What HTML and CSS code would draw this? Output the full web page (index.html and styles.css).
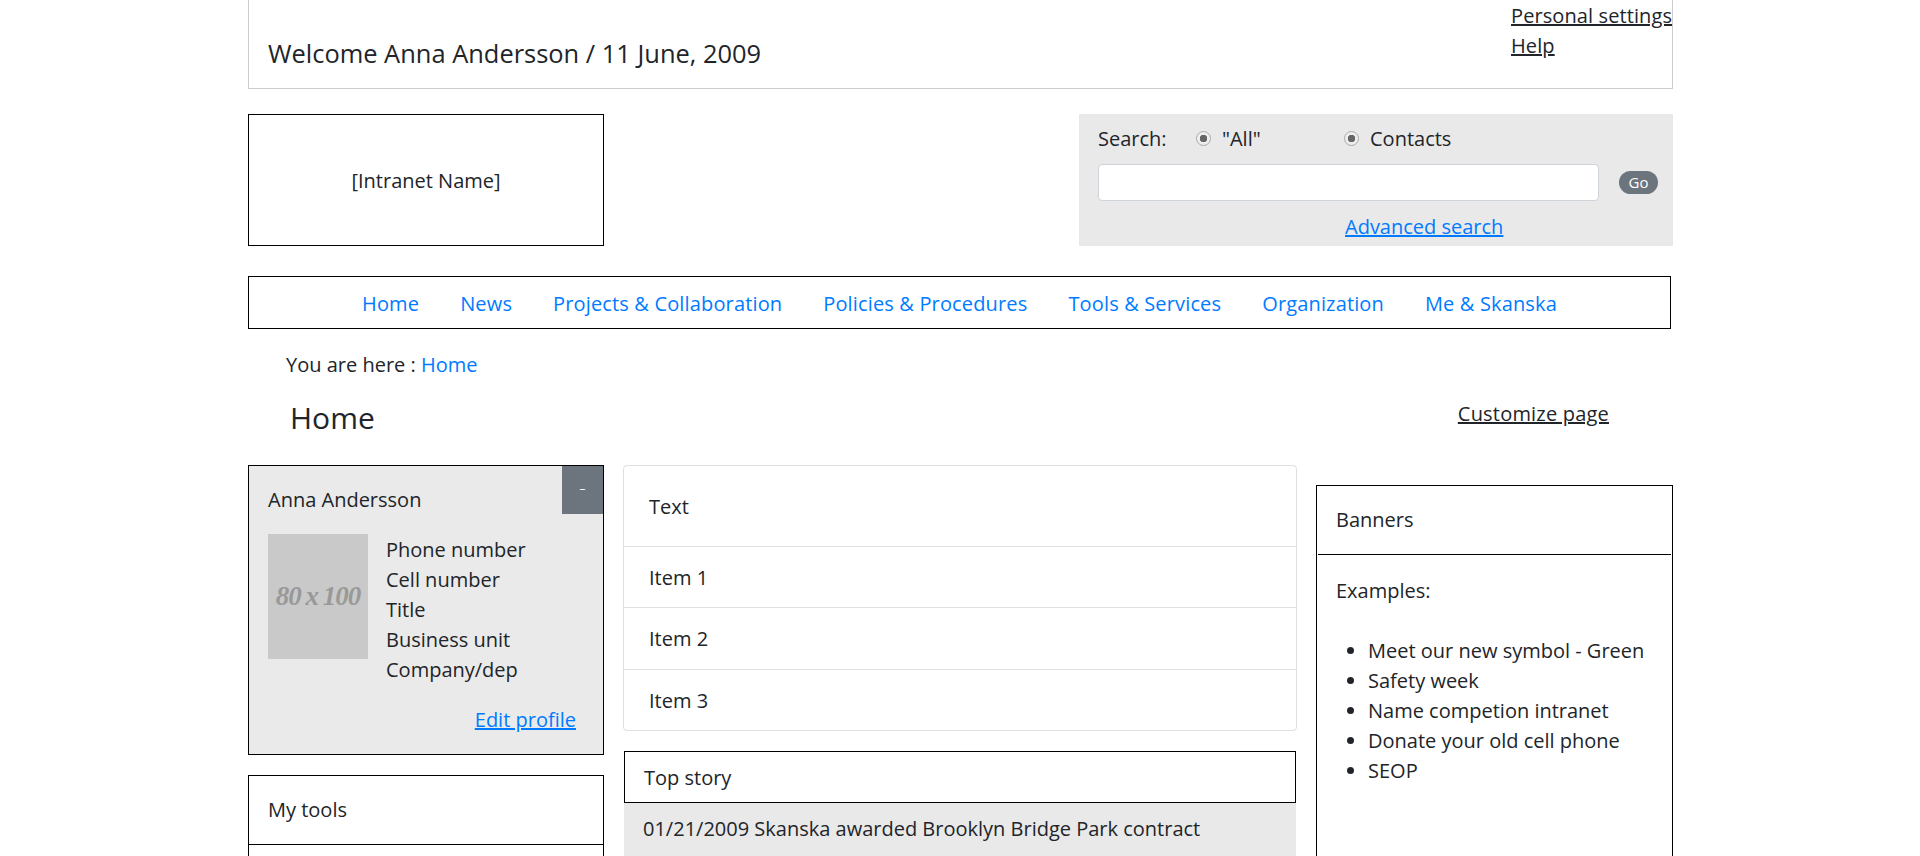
FILE: index.html
```html
<!DOCTYPE html>
<html>
<head>
	<title>Intranet Home</title>
	<link rel="stylesheet" href="styles.css">
</head>
<body>
	<div class="page">
		<div class="topbar">
			<div class="welcome">Welcome Anna Andersson / 11 June, 2009</div>
			<div class="toplinks">
				<a href="#">Personal settings</a>
				<a href="#">Help</a>
			</div>
		</div>
		<div class="masthead">
			<div class="logo">[Intranet Name]</div>
			<form class="search">
				<div class="search-opts">
					<span class="search-label">Search:</span>
					<label class="opt opt-all"><input type="radio" checked disabled>"All"</label>
					<label class="opt"><input type="radio" checked disabled>Contacts</label>
				</div>
				<div class="search-row">
					<input class="search-input" type="text">
					<button class="go" type="button">Go</button>
				</div>
				<a class="advanced" href="#">Advanced search</a>
			</form>
		</div>
		<div class="nav">
			<a href="#">Home</a>
			<a href="#">News</a>
			<a href="#">Projects &amp; Collaboration</a>
			<a href="#">Policies &amp; Procedures</a>
			<a href="#">Tools &amp; Services</a>
			<a href="#">Organization</a>
			<a href="#">Me &amp; Skanska</a>
		</div>
		<div class="crumbs">You are here : <a href="#">Home</a></div>
		<div class="title-row">
			<h1>Home</h1>
			<a class="customize" href="#">Customize page</a>
		</div>
		<div class="columns">
			<div class="col-left">
				<div class="profile">
					<button class="collapse" type="button">-</button>
					<div class="profile-name">Anna Andersson</div>
					<div class="profile-body">
						<div class="photo">80 x 100</div>
						<ul class="profile-info">
							<li>Phone number</li>
							<li>Cell number</li>
							<li>Title</li>
							<li>Business unit</li>
							<li>Company/dep</li>
						</ul>
					</div>
					<div class="profile-edit"><a href="#">Edit profile</a></div>
				</div>
				<div class="box tools">
					<div class="box-head">My tools</div>
					<div class="box-body"></div>
				</div>
			</div>
			<div class="col-mid">
				<ul class="list">
					<li class="list-first">Text</li>
					<li>Item 1</li>
					<li>Item 2</li>
					<li>Item 3</li>
				</ul>
				<div class="story-head">Top story</div>
				<div class="story-body">01/21/2009 Skanska awarded Brooklyn Bridge Park contract</div>
			</div>
			<div class="col-right">
				<div class="box banners">
					<div class="box-head">Banners</div>
					<div class="box-body">
						<p>Examples:</p>
						<ul>
							<li>Meet our new symbol - Green</li>
							<li>Safety week</li>
							<li>Name competion intranet</li>
							<li>Donate your old cell phone</li>
							<li>SEOP</li>
						</ul>
					</div>
				</div>
			</div>
		</div>
	</div>
</body>
</html>
```

FILE: styles.css
```css
html, body {
	height: 856px;
	overflow: hidden;
}
body {
	margin: 0;
	font-family: "Open Sans", "Noto Sans", sans-serif;
	font-size: 20px;
	line-height: 30px;
	color: #212529;
	background-color: #fff;
}
a {
	color: #007bff;
}
ul {
	margin: 0;
	padding: 0;
	list-style: none;
}
.page {
	width: 1425px;
	margin-left: 248px;
}
.topbar {
	display: flex;
	justify-content: space-between;
	height: 89px;
	box-sizing: border-box;
	padding-top: 1px;
	border: 1px solid #ccc;
	border-top: 0;
}
.welcome {
	margin: 34px 0 0 19px;
	font-size: 25.45px;
	line-height: 36px;
}
.toplinks {
	display: flex;
	flex-direction: column;
	align-items: flex-start;
	width: 161px;
}
.toplinks a {
	color: #212529;
	letter-spacing: .1px;
	white-space: nowrap;
}
.masthead {
	display: flex;
	justify-content: space-between;
	margin-top: 25px;
}
.logo {
	display: flex;
	justify-content: center;
	align-items: center;
	width: 356px;
	height: 132px;
	box-sizing: border-box;
	padding-top: 2px;
	border: 1px solid #000;
}
.search {
	width: 594px;
	height: 132px;
	box-sizing: border-box;
	padding: 10px 0 0 19px;
	background-color: #e9e9e9;
}
.search-opts {
	display: flex;
	align-items: center;
}
.search-label {
	width: 98px;
}
.opt {
	display: flex;
	align-items: center;
}
.opt-all {
	width: 148px;
}
.opt input {
	appearance: none;
	width: 15px;
	height: 15px;
	margin: 0 11px 2px 0;
	border: 1px solid #aaa;
	border-radius: 50%;
	background: radial-gradient(circle, #666 0 3.5px, #eee 4px);
}
.search-row {
	display: flex;
	align-items: center;
	margin-top: 10px;
}
.search-input {
	width: 501px;
	height: 37px;
	box-sizing: border-box;
	border: 1px solid #ced4da;
	border-radius: 4px;
	background: #fff;
}
.go {
	width: 39px;
	height: 23px;
	margin-left: 20px;
	padding: 0;
	border: 0;
	border-radius: 12px;
	color: #fff;
	background-color: #6c757d;
	font-family: inherit;
	font-size: 15px;
	line-height: 23px;
}
.advanced {
	display: block;
	width: fit-content;
	margin: 11px 0 0 247px;
}
.nav {
	display: flex;
	justify-content: center;
	align-items: center;
	gap: 41px;
	width: 1423px;
	height: 53px;
	box-sizing: border-box;
	margin-top: 30px;
	padding-top: 2px;
	border: 1px solid #000;
}
.nav a {
	letter-spacing: .15px;
	text-decoration: none;
}
.crumbs {
	margin: 21px 0 0 38px;
}
.crumbs a {
	text-decoration: none;
}
.title-row {
	display: flex;
	justify-content: space-between;
	height: 70px;
	margin: 15px 0 0 42px;
}
h1 {
	margin: 0;
	font-size: 30px;
	font-weight: 400;
	line-height: 45px;
}
.customize {
	height: 30px;
	margin: 4px 64px 0 0;
	color: #212529;
	letter-spacing: .2px;
}
.columns {
	display: flex;
	align-items: flex-start;
}
.col-left {
	width: 356px;
	flex: none;
}
.profile {
	position: relative;
	height: 290px;
	box-sizing: border-box;
	padding: 19px 19px 0;
	border: 1px solid #000;
	background-color: #eaeaea;
}
.collapse {
	position: absolute;
	top: 0;
	right: 0;
	width: 41px;
	height: 48px;
	padding: 0 0 6px;
	border: 0;
	color: #fff;
	background-color: #6c757d;
	font-family: inherit;
	font-size: 20px;
	font-weight: 300;
}
.profile-body {
	display: flex;
	gap: 18px;
	margin-top: 19px;
}
.photo {
	display: flex;
	justify-content: center;
	align-items: center;
	width: 100px;
	height: 125px;
	flex: none;
	padding-bottom: 2px;
	box-sizing: border-box;
	color: #999;
	background-color: #c9c9c9;
	font-family: "Liberation Serif", serif;
	font-size: 27px;
	font-style: italic;
	font-weight: 700;
	letter-spacing: -1px;
	word-spacing: -1px;
	white-space: nowrap;
}
.profile-info {
	margin-top: 1px;
}
.profile-edit {
	margin: 20px 8px 0 0;
	text-align: right;
}
.box {
	border: 1px solid #000;
}
.box-head {
	padding: 19px 19px 18px;
	border-bottom: 1px solid #000;
}
.tools {
	height: 200px;
	margin-top: 20px;
}
.tools .box-head {
	height: 69px;
	box-sizing: border-box;
}
.col-mid {
	width: 674px;
	flex: none;
	margin-left: 19px;
}
.list {
	border: 1px solid #dfdfdf;
	border-radius: 4px;
}
.list li {
	height: 61.4px;
	box-sizing: border-box;
	padding: 16px 25px 0;
	border-top: 1px solid #dfdfdf;
}
.list .list-first {
	height: 80px;
	padding-top: 26px;
	border-top: 0;
}
.story-head {
	height: 52px;
	box-sizing: border-box;
	margin: 20px 1px 0;
	padding: 11px 19px 0;
	border: 1px solid #000;
}
.story-body {
	height: 100px;
	margin: 0 1px;
	padding: 11px 19px 0;
	background-color: #e9e9e9;
}
.col-right {
	width: 357px;
	flex: none;
	margin: 20px 0 0 19px;
}
.banners {
	height: 420px;
}
.banners .box-head {
	height: 69px;
	box-sizing: border-box;
	margin: 0 1px;
	padding-left: 18px;
}
.banners .box-body {
	padding: 21px 19px 0 19px;
}
.banners p {
	margin: 0 0 30px;
}
.banners ul {
	padding-left: 32px;
	list-style: disc;
}
```
